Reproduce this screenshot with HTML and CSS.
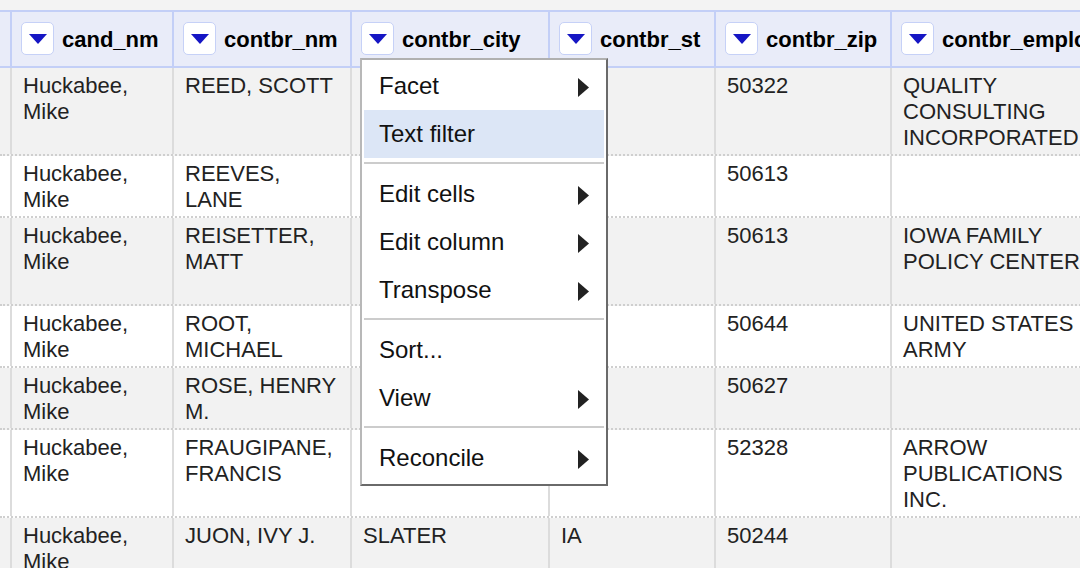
FILE: index.html
```html
<!DOCTYPE html>
<html>
<head>
<meta charset="utf-8">
<title>Data table</title>
<link rel="stylesheet" href="styles.css">
</head>
<body>
<div class="grid">
  <div class="row head">
    <div class="cell c0"></div>
    <div class="cell c1"><span class="dd"><svg width="18" height="10" viewBox="0 0 18 10"><polygon points="0,0 18,0 9,10" fill="#1616c4"/></svg></span><span class="hname">cand_nm</span></div>
    <div class="cell c2"><span class="dd"><svg width="18" height="10" viewBox="0 0 18 10"><polygon points="0,0 18,0 9,10" fill="#1616c4"/></svg></span><span class="hname">contbr_nm</span></div>
    <div class="cell c3"><span class="dd"><svg width="18" height="10" viewBox="0 0 18 10"><polygon points="0,0 18,0 9,10" fill="#1616c4"/></svg></span><span class="hname">contbr_city</span></div>
    <div class="cell c4"><span class="dd"><svg width="18" height="10" viewBox="0 0 18 10"><polygon points="0,0 18,0 9,10" fill="#1616c4"/></svg></span><span class="hname">contbr_st</span></div>
    <div class="cell c5"><span class="dd"><svg width="18" height="10" viewBox="0 0 18 10"><polygon points="0,0 18,0 9,10" fill="#1616c4"/></svg></span><span class="hname">contbr_zip</span></div>
    <div class="cell c6"><span class="dd"><svg width="18" height="10" viewBox="0 0 18 10"><polygon points="0,0 18,0 9,10" fill="#1616c4"/></svg></span><span class="hname">contbr_employer</span></div>
  </div>

  <div class="row odd">
    <div class="cell c0"></div>
    <div class="cell c1">Huckabee, Mike</div>
    <div class="cell c2">REED, SCOTT</div>
    <div class="cell c3"></div>
    <div class="cell c4"></div>
    <div class="cell c5">50322</div>
    <div class="cell c6">QUALITY CONSULTING INCORPORATED</div>
  </div>
  <div class="row even">
    <div class="cell c0"></div>
    <div class="cell c1">Huckabee, Mike</div>
    <div class="cell c2">REEVES, LANE</div>
    <div class="cell c3"></div>
    <div class="cell c4"></div>
    <div class="cell c5">50613</div>
    <div class="cell c6"></div>
  </div>
  <div class="row odd tall">
    <div class="cell c0"></div>
    <div class="cell c1">Huckabee, Mike</div>
    <div class="cell c2">REISETTER, MATT</div>
    <div class="cell c3"></div>
    <div class="cell c4"></div>
    <div class="cell c5">50613</div>
    <div class="cell c6">IOWA FAMILY POLICY CENTER</div>
  </div>
  <div class="row even">
    <div class="cell c0"></div>
    <div class="cell c1">Huckabee, Mike</div>
    <div class="cell c2">ROOT, MICHAEL</div>
    <div class="cell c3"></div>
    <div class="cell c4"></div>
    <div class="cell c5">50644</div>
    <div class="cell c6">UNITED STATES ARMY</div>
  </div>
  <div class="row odd">
    <div class="cell c0"></div>
    <div class="cell c1">Huckabee, Mike</div>
    <div class="cell c2">ROSE, HENRY M.</div>
    <div class="cell c3"></div>
    <div class="cell c4"></div>
    <div class="cell c5">50627</div>
    <div class="cell c6"></div>
  </div>
  <div class="row even">
    <div class="cell c0"></div>
    <div class="cell c1">Huckabee, Mike</div>
    <div class="cell c2">FRAUGIPANE, FRANCIS</div>
    <div class="cell c3"></div>
    <div class="cell c4"></div>
    <div class="cell c5">52328</div>
    <div class="cell c6">ARROW PUBLICATIONS INC.</div>
  </div>
  <div class="row odd">
    <div class="cell c0"></div>
    <div class="cell c1">Huckabee, Mike</div>
    <div class="cell c2">JUON, IVY J.</div>
    <div class="cell c3">SLATER</div>
    <div class="cell c4">IA</div>
    <div class="cell c5">50244</div>
    <div class="cell c6"></div>
  </div>
</div>

<div class="menu">
  <div class="item"><span>Facet</span><svg class="arr" width="11" height="19" viewBox="0 0 11 19"><polygon points="0,0 11,9.5 0,19" fill="#222"/></svg></div>
  <div class="item active"><span>Text filter</span></div>
  <div class="sep"></div>
  <div class="item"><span>Edit cells</span><svg class="arr" width="11" height="19" viewBox="0 0 11 19"><polygon points="0,0 11,9.5 0,19" fill="#222"/></svg></div>
  <div class="item"><span>Edit column</span><svg class="arr" width="11" height="19" viewBox="0 0 11 19"><polygon points="0,0 11,9.5 0,19" fill="#222"/></svg></div>
  <div class="item"><span>Transpose</span><svg class="arr" width="11" height="19" viewBox="0 0 11 19"><polygon points="0,0 11,9.5 0,19" fill="#222"/></svg></div>
  <div class="sep"></div>
  <div class="item"><span>Sort...</span></div>
  <div class="item"><span>View</span><svg class="arr" width="11" height="19" viewBox="0 0 11 19"><polygon points="0,0 11,9.5 0,19" fill="#222"/></svg></div>
  <div class="sep"></div>
  <div class="item"><span>Reconcile</span><svg class="arr" width="11" height="19" viewBox="0 0 11 19"><polygon points="0,0 11,9.5 0,19" fill="#222"/></svg></div>
</div>
</body>
</html>
```

FILE: styles.css
```css
html, body {
  margin: 0;
  padding: 0;
  overflow: hidden;
  width: 1080px;
  height: 568px;
}
body {
  background: #f3f3f3;
  font-family: "Liberation Sans", Arial, Helvetica, sans-serif;
  position: relative;
}
.grid {
  margin-top: 10px;
  width: 1100px;
}
.row {
  display: flex;
  align-items: stretch;
}
.cell {
  box-sizing: border-box;
  flex: none;
  border-left: 2px solid #dcdcdc;
  padding: 5px 10px 3px 11px;
  font-size: 22px;
  line-height: 26px;
  color: #222;
}
.c0 { width: 10px; border-left: none; padding: 0; }
.c1 { width: 162px; }
.c2 { width: 178px; }
.c3 { width: 198px; }
.c4 { width: 166px; }
.c5 { width: 176px; }
.c6 { width: 210px; }

.row.odd { background: #f2f2f2; border-bottom: 2px dotted #cfcfcf; }
.row.even { background: #ffffff; border-bottom: 2px dotted #cfcfcf; }
.row.tall { min-height: 86px; }

.row.head {
  background: #e9ecf9;
  border-top: 2px solid #c3cff7;
  border-bottom: 2px solid #c3cff7;
  height: 58px;
  box-sizing: border-box;
}
.row.head .cell {
  border-left: 2px solid #c3cff7;
  display: flex;
  align-items: center;
  padding: 0 0 0 9px;
  overflow: hidden;
  white-space: nowrap;
}
.row.head .c0 { border-left: none; padding: 0; }
.dd {
  box-sizing: border-box;
  flex: none;
  width: 33px;
  height: 33px;
  background: #ffffff;
  border: 1px solid #c6d1f7;
  border-radius: 5px;
  display: flex;
  align-items: center;
  justify-content: center;
  margin-top: -1px;
}
.dd svg { display: block; }
.hname {
  margin-left: 8px;
  font-weight: bold;
  font-size: 22px;
  color: #000;
  margin-top: 2px;
}

.menu {
  position: absolute;
  left: 360px;
  top: 58px;
  width: 248px;
  box-sizing: border-box;
  background: #ffffff;
  border: 2px solid;
  border-color: #b0b0b0 #6a6a6a #6a6a6a #b8b8b8;
  padding: 2px;
}
.item {
  height: 48px;
  display: flex;
  align-items: center;
  justify-content: space-between;
  padding: 0 15px;
  font-size: 24px;
  color: #111;
}
.item.active { background: #dce6f6; }
.arr { display: block; margin-top: 2px; }
.sep {
  height: 2px;
  background: #cccccc;
  margin: 4px 0 6px 0;
}
```
